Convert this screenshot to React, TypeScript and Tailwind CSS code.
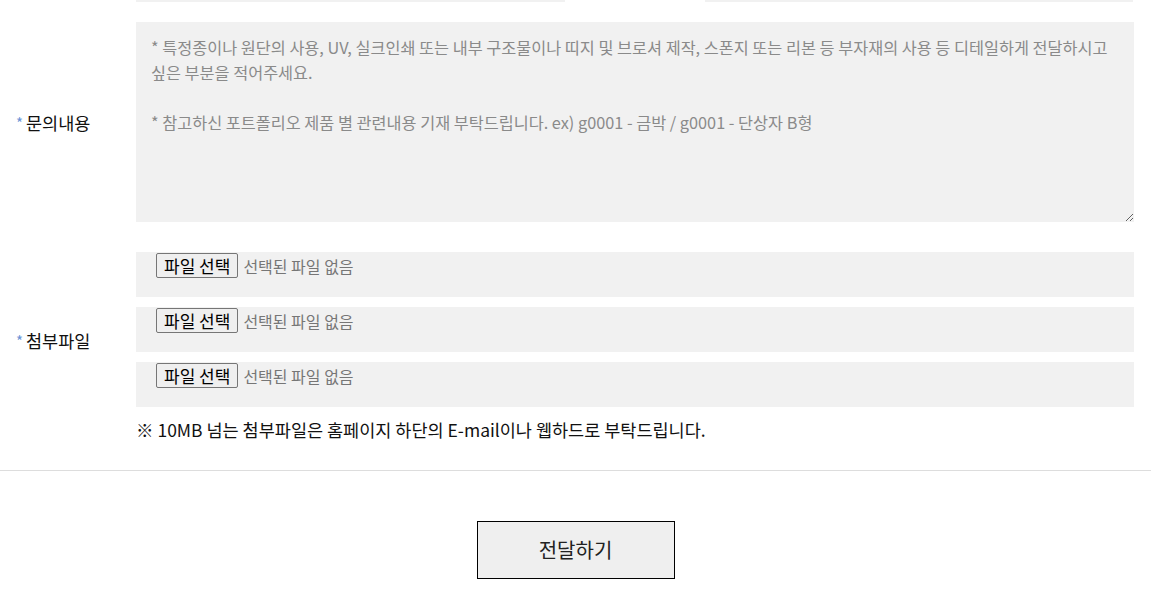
const FONT = { fontFamily: '"Noto Sans CJK KR", "Noto Sans", sans-serif' }

const PLACEHOLDER =
  '* 특정종이나 원단의 사용, UV, 실크인쇄 또는 내부 구조물이나 띠지 및 브로셔 제작, 스폰지 또는 리본 등 부자재의 사용 등 디테일하게 전달하시고 싶은 부분을 적어주세요.\n\n* 참고하신 포트폴리오 제품 별 관련내용 기재 부탁드립니다. ex) g0001 - 금박 / g0001 - 단상자 B형'

function Label({ text, top }: { text: string; top?: boolean }) {
  return (
    <div
      className={`w-[136px] shrink-0 pl-4 flex text-[17.5px] leading-[25px] text-[#111] ${
        top ? 'items-start pt-[76px]' : 'items-center'
      }`}
    >
      <span className="text-[#6b93d6] text-[15px] mr-[3px]">*</span>
      {text}
    </div>
  )
}

function FileRow() {
  return (
    <div className="h-[45px] bg-[#f1f1f1] pl-5 pt-px">
      <div className="flex items-center h-[25px]">
        <span className="h-[25px] px-[7px] flex items-center border border-[#767676] rounded-[2px] bg-[#efefef] text-[17px] text-black">
          파일 선택
        </span>
        <span className="ml-[5px] text-[16px] text-[#767676]">선택된 파일 없음</span>
      </div>
    </div>
  )
}

export default function App() {
  return (
    <div className="w-[1151px] h-[605px] bg-white overflow-hidden" style={FONT}>
      {/* tail of previous row */}
      <div className="flex h-[2px] pl-[136px]">
        <div className="w-[429px] bg-[#f1f1f1]" />
        <div className="w-[140px]" />
        <div className="w-[428px] bg-[#f1f1f1]" />
      </div>

      <div className="flex mt-5">
        <Label text="문의내용" />
        <textarea
          className="w-[998px] h-[200px] bg-[#f1f1f1] px-[15px] pt-[13px] text-[16.3px] leading-[25px] break-keep outline-none placeholder:text-[#8a8a8a]"
          placeholder={PLACEHOLDER}
        />
      </div>

      <div className="flex mt-[30px]">
        <Label text="첨부파일" top />
        <div className="w-[998px] flex flex-col gap-[10px]">
          <FileRow />
          <FileRow />
          <FileRow />
          <p className="text-[17.5px] leading-[25px] text-[#111]">
            ※ 10MB 넘는 첨부파일은 홈페이지 하단의 E-mail이나 웹하드로 부탁드립니다.
          </p>
        </div>
      </div>

      <div className="mt-[28px] border-t border-[#dddddd]" />

      <div className="flex justify-center mt-[50px]">
        <button className="w-[198px] h-[58px] border border-black bg-[#efefef] text-[20px] text-[#222]">
          전달하기
        </button>
      </div>
    </div>
  )
}
